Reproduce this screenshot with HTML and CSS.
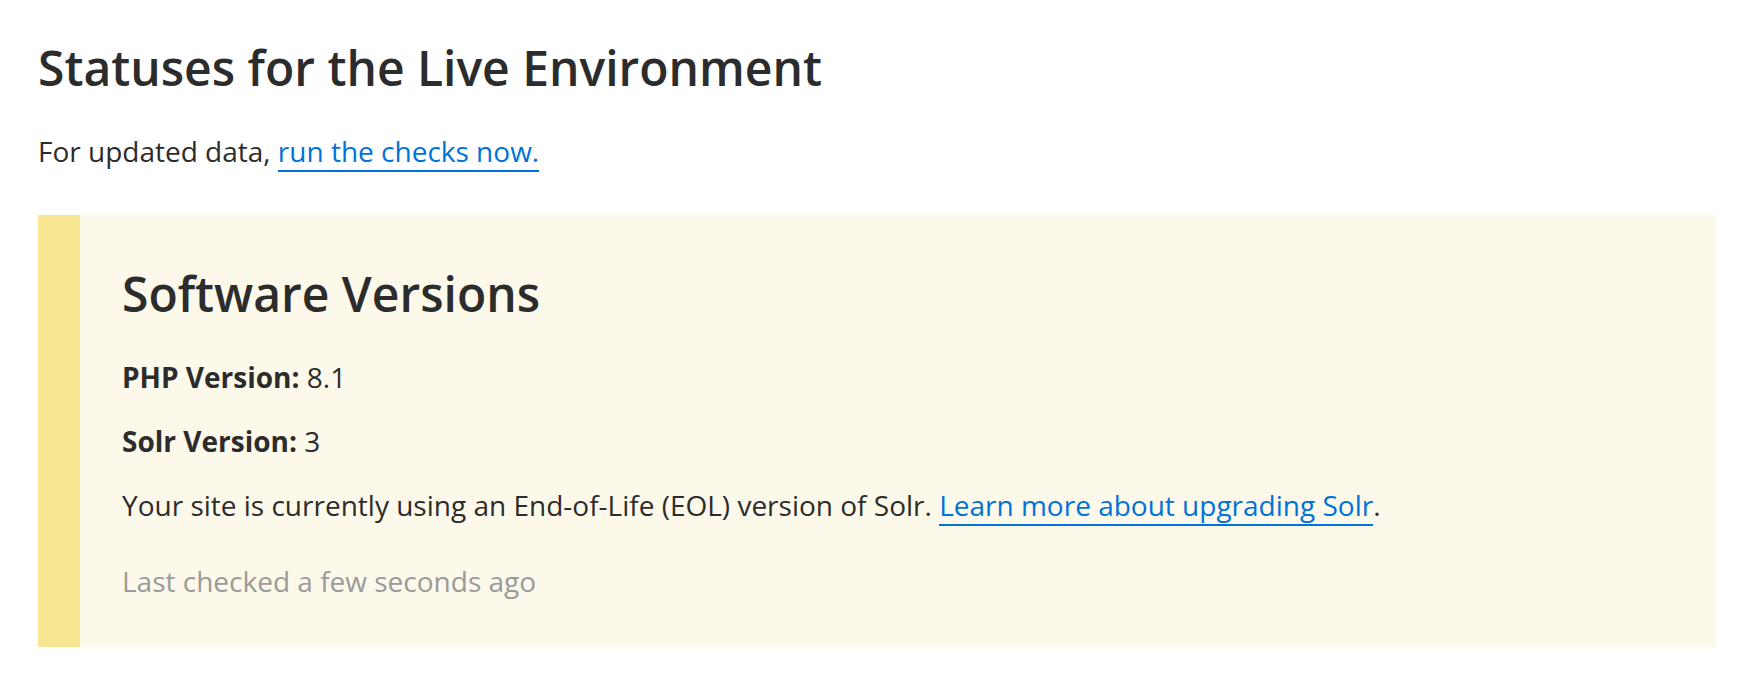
FILE: index.html
```html
<!DOCTYPE html>
<html lang="en">
<head>
<meta charset="utf-8">
<title>Statuses for the Live Environment</title>
<link rel="stylesheet" href="styles.css">
</head>
<body>
<main class="page">
  <h1 class="title">Statuses for the Live Environment</h1>
  <p class="intro">For updated data, <a class="link" href="#">run the checks now.</a></p>
  <section class="notice">
    <h2 class="notice-title">Software Versions</h2>
    <p class="row first"><strong>PHP Version:</strong> 8.1</p>
    <p class="row"><strong>Solr Version:</strong> 3</p>
    <p class="row">Your site is currently using an End-of-Life (EOL) version of Solr. <a class="link" href="#">Learn more about upgrading Solr</a>.</p>
    <p class="row muted">Last checked a few seconds ago</p>
  </section>
</main>
</body>
</html>
```

FILE: styles.css
```css
html, body {
  margin: 0;
  padding: 0;
  background: #ffffff;
}

body {
  font-family: "Open Sans", "Noto Sans", sans-serif;
  color: #2c2c2c;
  font-size: 28px;
  line-height: 40px;
}

.page {
  padding: 38px 36px 0 38px;
}

.title {
  margin: 0;
  font-size: 48px;
  line-height: 60px;
  font-weight: 600;
}

.intro {
  margin: 33px 0 0 0;
}

.link {
  color: #0073d8;
  text-decoration: none;
  border-bottom: 2px solid #0073d8;
}

.notice {
  margin-top: 44px;
  background: #fcf9ea;
  border-left: 42px solid #f7e592;
  padding: 49px 42px 46px 42px;
}

.notice-title {
  margin: 0;
  font-size: 48px;
  line-height: 60px;
  font-weight: 600;
}

.row {
  margin: 24px 0 0 0;
}

.row.first {
  margin-top: 33px;
}

.row strong {
  font-weight: 700;
}

.row.muted {
  margin-top: 36px;
  color: #9a9a9a;
}
```
